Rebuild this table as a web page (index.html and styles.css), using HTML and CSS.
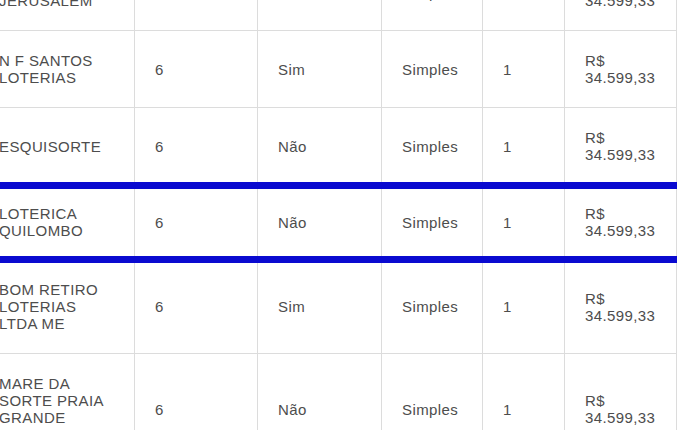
FILE: index.html
```html
<!DOCTYPE html>
<html lang="pt-BR">
<head>
<meta charset="utf-8">
<title>Lotéricas</title>
<link rel="stylesheet" href="styles.css">
</head>
<body>
<div class="wrap">
<table class="grid">
  <colgroup>
    <col class="c-name"><col class="c-qt"><col class="c-yn"><col class="c-type"><col class="c-n"><col class="c-val">
  </colgroup>
  <tbody>
    <tr><td>LOTERICA JERUSALEM</td><td>6</td><td>Não</td><td>Simples</td><td>1</td><td>R$ 34.599,33</td></tr>
    <tr><td>N F SANTOS LOTERIAS</td><td>6</td><td>Sim</td><td>Simples</td><td>1</td><td>R$ 34.599,33</td></tr>
    <tr><td>ESQUISORTE</td><td>6</td><td>Não</td><td>Simples</td><td>1</td><td>R$ 34.599,33</td></tr>
    <tr class="sel"><td>LOTERICA QUILOMBO</td><td>6</td><td>Não</td><td>Simples</td><td>1</td><td>R$ 34.599,33</td></tr>
    <tr><td>BOM RETIRO LOTERIAS LTDA ME</td><td>6</td><td>Sim</td><td>Simples</td><td>1</td><td>R$ 34.599,33</td></tr>
    <tr><td>MARE DA SORTE PRAIA GRANDE LOTERIAS</td><td>6</td><td>Não</td><td>Simples</td><td>1</td><td>R$ 34.599,33</td></tr>
  </tbody>
</table>
</div>
</body>
</html>
```
FILE: styles.css
```css
html, body {
  margin: 0;
  padding: 0;
  overflow: hidden;
  background: #ffffff;
}
.wrap {
  margin-top: -47px;
  margin-left: -22px;
}
.grid {
  border-collapse: collapse;
  table-layout: fixed;
  width: 698px;
  font-family: "Liberation Sans", Arial, sans-serif;
  font-size: 15px;
  letter-spacing: 0.4px;
  line-height: 17px;
  color: #4d4d4d;
}
.c-name { width: 156px; }
.c-qt { width: 123px; }
.c-yn { width: 124px; }
.c-type { width: 101px; }
.c-n { width: 82px; }
.c-val { width: 112px; }
.grid td {
  border: 1px solid #dcdcdc;
  padding: 21px 20px;
  vertical-align: middle;
  text-align: left;
}
.grid tr:has(+ tr.sel) td {
  padding-bottom: 18.5px;
}
.grid tr.sel + tr td {
  padding-top: 18.5px;
}
.grid tr.sel td {
  padding-top: 16.5px;
  padding-bottom: 16.5px;
  border-top: 7px solid #0a0ad0;
  border-bottom: 7px solid #0a0ad0;
}
```
